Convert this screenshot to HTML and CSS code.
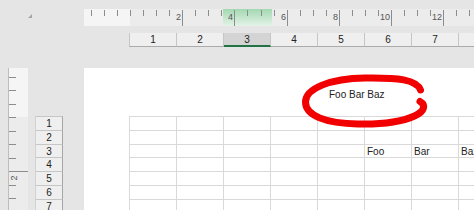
FILE: index.html
```html
<!DOCTYPE html>
<html lang="en">
<head>
  <meta charset="UTF-8">
  <title>Page Layout</title>
  <link rel="stylesheet" href="styles.css">
</head>
<body>

  <div class="sheet">
    <div class="corner"><span class="corner-mark"></span></div>

    <div class="ruler-top">
      <svg width="390" height="17" viewBox="0 0 390 17">
        <defs>
          <linearGradient id="sel" x1="0" y1="0" x2="0" y2="1">
            <stop offset="0" stop-color="#a3d8b0"/>
            <stop offset="1" stop-color="#e4f3e8"/>
          </linearGradient>
        </defs>
        <rect x="0" y="0" width="390" height="17" fill="#ececec"/>
        <rect x="0" y="0" width="46" height="17" fill="#f5f5f5"/>
        <rect x="139" y="0" width="49" height="17" fill="url(#sel)"/>
        <path stroke="#8c8c8c" stroke-width="1" fill="none"
          d="M7.5 1V7M20.5 1V7M33.5 1V7M46.5 1V7M59.5 1V7M72.5 1V7M85.5 1V7
             M98.5 1V17M111.5 1V7M124.5 1V7M137.5 1V7M150.5 1V17M163.5 1V7M177.5 1V7M190.5 1V7
             M203.5 1V17M216.5 1V7M229.5 1V7M242.5 1V7M255.5 1V17M268.5 1V7M281.5 1V7M294.5 1V7
             M307.5 1V17M320.5 1V7M333.5 1V7M346.5 1V7M359.5 1V17M372.5 1V7M385.5 1V7"/>
        <g class="ruler-num" text-anchor="end">
          <text x="97" y="11">2</text>
          <text x="149" y="11">4</text>
          <text x="202" y="11">6</text>
          <text x="254" y="11">8</text>
          <text x="306" y="11">10</text>
          <text x="358" y="11">12</text>
        </g>
      </svg>
    </div>

    <div class="col-heads">
      <div class="col-head">1</div>
      <div class="col-head">2</div>
      <div class="col-head selected">3</div>
      <div class="col-head">4</div>
      <div class="col-head">5</div>
      <div class="col-head">6</div>
      <div class="col-head">7</div>
      <div class="col-head"></div>
    </div>

    <div class="ruler-left">
      <svg width="20" height="142" viewBox="0 0 20 142">
        <rect x="0" y="0" width="20" height="142" fill="#ececec"/>
        <rect x="0" y="0" width="20" height="49" fill="#f5f5f5"/>
        <path stroke="#bdbdbd" d="M0.5 0V142"/>
        <path stroke="#8c8c8c" stroke-width="1" fill="none"
          d="M1 9.5H8M1 22.5H8M1 36.5H8M1 49.5H8M1 63.5H8M1 76.5H8M1 90.5H8
             M1 103.5H20M1 117.5H8M1 130.5H8"/>
        <text class="ruler-num" transform="translate(9 110) rotate(-90)" text-anchor="middle">2</text>
      </svg>
    </div>

    <div class="row-heads">
      <div class="row-head">1</div>
      <div class="row-head">2</div>
      <div class="row-head">3</div>
      <div class="row-head">4</div>
      <div class="row-head">5</div>
      <div class="row-head">6</div>
      <div class="row-head">7</div>
    </div>

    <div class="page">
      <div class="page-header">Foo Bar Baz</div>

      <div class="cells">
        <div></div><div></div><div></div><div></div><div></div><div></div><div></div><div></div>
        <div></div><div></div><div></div><div></div><div></div><div></div><div></div><div></div>
        <div></div><div></div><div></div><div></div><div></div><div>Foo</div><div>Bar</div><div>Baz</div>
        <div></div><div></div><div></div><div></div><div></div><div></div><div></div><div></div>
        <div></div><div></div><div></div><div></div><div></div><div></div><div></div><div></div>
        <div></div><div></div><div></div><div></div><div></div><div></div><div></div><div></div>
        <div></div><div></div><div></div><div></div><div></div><div></div><div></div><div></div>
      </div>

      <!-- hand drawn circle around the header -->
      <svg class="scribble" width="390" height="142" viewBox="0 0 390 142">
        <path d="M336 33.5 C341.5 36.5, 341.5 43, 330.5 48 C316 54.5, 296 56.5, 274 56 C241.5 55.5, 221.5 47.5, 221.5 34 C221.5 20.5, 246 10.5, 281 10 C314 9.5, 332.5 11.5, 336.5 22"
          fill="none" stroke="#f20000" stroke-width="7" stroke-linecap="round"/>
      </svg>
    </div>
  </div>

</body>
</html>
```

FILE: styles.css
```css
* {
  margin: 0;
  padding: 0;
  box-sizing: border-box;
}

body {
  background-color: #e5e5e5;
  font-family: 'Liberation Sans', Arial, sans-serif;
  color: #222;
  overflow: hidden;
}

.sheet {
  width: 474px;
  height: 210px;
  overflow: hidden;
  display: grid;
  grid-template-columns: 8px 20px 7px 28px 21px 1fr;
  grid-template-rows: 9px 17px 7px 14px 21px 1fr;
}

.corner {
  grid-column: 1 / 6;
  grid-row: 1 / 4;
  padding: 14px 0 0 28px;
}

.corner-mark {
  display: block;
  width: 0;
  height: 0;
  border-left: 4px solid transparent;
  border-bottom: 4px solid #a5a5a5;
}

.ruler-top {
  grid-column: 6;
  grid-row: 2;
  overflow: hidden;
}

.ruler-top svg, .ruler-left svg {
  display: block;
}

.ruler-num {
  font-family: 'Liberation Sans', Arial, sans-serif;
  font-size: 9px;
  fill: #555;
}

.col-heads {
  grid-column: 6;
  grid-row: 4;
  display: flex;
  padding-left: 45px;
  overflow: hidden;
}

.col-head {
  flex: none;
  width: 47px;
  height: 14px;
  background-color: #efefef;
  border-right: 1px solid #c6c6c6;
  border-bottom: 1px solid #ababab;
  font-size: 10px;
  line-height: 13px;
  text-align: center;
}

.col-head:first-child {
  border-left: 1px solid #c6c6c6;
  width: 48px;
}

.col-head.selected {
  background-color: #d4d4d4;
  border-bottom: 2px solid #217346;
}

.ruler-left {
  grid-column: 2;
  grid-row: 6;
  overflow: hidden;
}

.row-heads {
  grid-column: 4;
  grid-row: 6;
  padding-top: 48px;
}

.row-head {
  height: 13.8px;
  background-color: #efefef;
  border-left: 1px solid #d2d2d2;
  border-right: 1px solid #a5a5a5;
  border-bottom: 1px solid #c6c6c6;
  font-size: 10px;
  line-height: 13px;
  text-align: center;
}

.row-head:first-child {
  height: 14.8px;
  border-top: 1px solid #c6c6c6;
}

.page {
  grid-column: 6;
  grid-row: 6;
  position: relative;
  background-color: #fff;
  overflow: hidden;
  padding-top: 21px;
}

.page-header {
  height: 12px;
  margin-bottom: 15px;
  padding-left: 245px;
  font-size: 10px;
  line-height: 12px;
  white-space: nowrap;
}

.cells {
  display: grid;
  grid-template-columns: repeat(8, 47px);
  grid-auto-rows: 13.8px;
  width: max-content;
  margin-left: 45px;
  border-left: 1px solid #d9d9d9;
  border-top: 1px solid #d9d9d9;
}

.cells div {
  border-right: 1px solid #d9d9d9;
  border-bottom: 1px solid #d9d9d9;
  font-size: 10px;
  line-height: 13px;
  padding-left: 2px;
  white-space: nowrap;
  overflow: hidden;
}

.scribble {
  position: absolute;
  top: 0;
  left: 0;
}
```
